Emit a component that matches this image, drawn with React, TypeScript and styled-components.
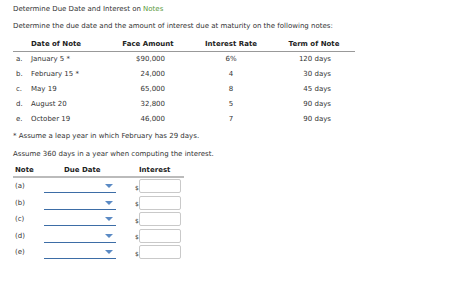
import React from 'react';
import styled, { createGlobalStyle } from 'styled-components';

const notes = [
  { key: 'a', date: 'January 5 *', amount: '$90,000', rate: '6%', term: '120 days' },
  { key: 'b', date: 'February 15 *', amount: '24,000', rate: '4', term: '30 days' },
  { key: 'c', date: 'May 19', amount: '65,000', rate: '8', term: '45 days' },
  { key: 'd', date: 'August 20', amount: '32,800', rate: '5', term: '90 days' },
  { key: 'e', date: 'October 19', amount: '46,000', rate: '7', term: '90 days' },
];

const GlobalStyle = createGlobalStyle`
  body {
    margin: 0;
    background: #fff;
    font-family: "DejaVu Sans", Verdana, sans-serif;
    font-size: 7px;
    color: #333;
  }
`;

const App = () => {
  return (
    <Page>
      <GlobalStyle />
      <Title>
        Determine Due Date and Interest on <Link>Notes</Link>
      </Title>
      <Text>Determine the due date and the amount of interest due at maturity on the following notes:</Text>
      <NotesGrid>
        <HeadCell />
        <HeadCell $align="left">Date of Note</HeadCell>
        <HeadCell>Face Amount</HeadCell>
        <HeadCell>Interest Rate</HeadCell>
        <HeadCell>Term of Note</HeadCell>
        <HeadCell />
        {notes.map((n) => (
          <React.Fragment key={n.key}>
            <Cell $align="left" $pad="3px">{n.key}.</Cell>
            <Cell $align="left">{n.date}</Cell>
            <Cell $align="right" $padRight="13px">{n.amount}</Cell>
            <Cell>{n.rate}</Cell>
            <Cell $align="right" $padRight="13px">{n.term}</Cell>
            <Cell />
          </React.Fragment>
        ))}
      </NotesGrid>
      <Footnote $gap="4px">* Assume a leap year in which February has 29 days.</Footnote>
      <Footnote $gap="8px">Assume 360 days in a year when computing the interest.</Footnote>
      <AnswerGrid>
        <AnswerHead $pad="2px">Note</AnswerHead>
        <AnswerHead $pad="20px">Due Date</AnswerHead>
        <AnswerHead $pad="4px">Interest</AnswerHead>
        {notes.map((n) => (
          <React.Fragment key={n.key}>
            <AnswerCell $pad="2px">({n.key})</AnswerCell>
            <AnswerCell>
              <Select>
                <Arrow />
              </Select>
            </AnswerCell>
            <AnswerCell>
              <Dollar>$</Dollar>
              <AmountInput />
            </AnswerCell>
          </React.Fragment>
        ))}
      </AnswerGrid>
    </Page>
  );
};

const Page = styled.div`
  padding: 4px 0 0 13px;
`;

const Title = styled.div`
  height: 10px;
  line-height: 10px;
  margin-bottom: 7px;
`;

const Link = styled.span`
  color: #5b9a3c;
`;

const Text = styled.div`
  height: 10px;
  line-height: 10px;
  margin-bottom: 6px;
`;

const NotesGrid = styled.div`
  display: grid;
  width: 342px;
  grid-template-columns: 18px 87px 60px 106px 60px 11px;
  grid-auto-rows: 15px;
`;

const HeadCell = styled.div<{ $align?: string }>`
  font-weight: bold;
  color: #222;
  text-align: ${(p) => p.$align || 'center'};
  line-height: 14px;
  border-bottom: 1px solid #999;
`;

const Cell = styled.div<{ $align?: string; $pad?: string; $padRight?: string }>`
  text-align: ${(p) => p.$align || 'center'};
  padding-left: ${(p) => p.$pad || '0'};
  padding-right: ${(p) => p.$padRight || '0'};
  line-height: 15px;
`;

const Footnote = styled.div<{ $gap: string }>`
  height: 10px;
  line-height: 10px;
  margin-top: ${(p) => p.$gap};
`;

const AnswerGrid = styled.div`
  display: grid;
  width: 171px;
  margin-top: 6px;
  grid-template-columns: 31px 91px 49px;
  grid-template-rows: 13px;
  grid-auto-rows: 16.5px;
`;

const AnswerHead = styled.div<{ $pad?: string }>`
  font-weight: bold;
  color: #222;
  line-height: 11px;
  padding-left: ${(p) => p.$pad || '0'};
  border-bottom: 2px solid #bbb;
`;

const AnswerCell = styled.div<{ $pad?: string }>`
  display: flex;
  align-items: center;
  padding-left: ${(p) => p.$pad || '0'};
`;

const Select = styled.div`
  position: relative;
  width: 72px;
  height: 11px;
  margin-top: 2px;
  border-bottom: 1px solid #3d6da6;
`;

const Arrow = styled.span`
  position: absolute;
  right: 3px;
  top: 3px;
  width: 0;
  height: 0;
  border-left: 4px solid transparent;
  border-right: 4px solid transparent;
  border-top: 4px solid #5b8ac4;
`;

const Dollar = styled.span`
  font-size: 6px;
  margin-top: 2px;
  width: 4px;
`;

const AmountInput = styled.div`
  width: 40px;
  height: 12px;
  border: 1px solid #c9c9c9;
  border-radius: 2px;
`;

export default App;
